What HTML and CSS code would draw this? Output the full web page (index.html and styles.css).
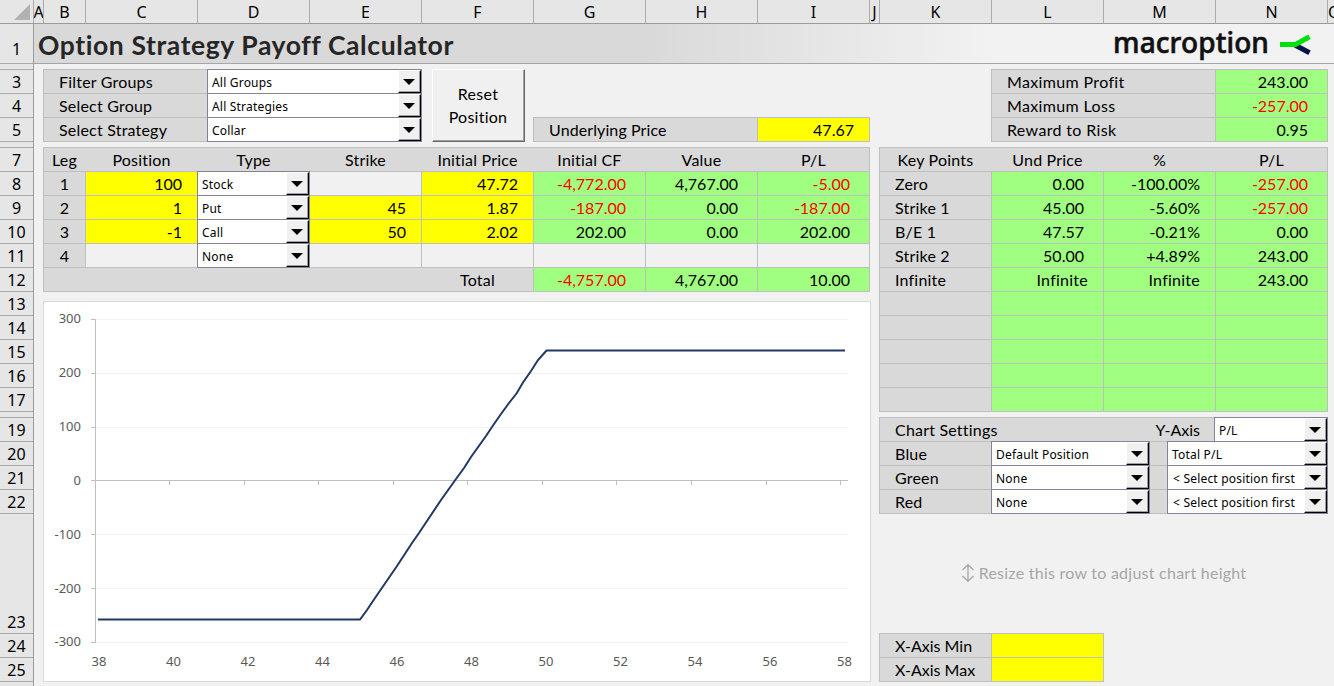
FILE: index.html
```html
<!DOCTYPE html>
<html lang="en">
  <head>
    <meta charset="utf-8">
    <title>Option Strategy Payoff Calculator</title>
    <link rel="stylesheet" href="styles.css">
  </head>
  <body>
    <div class="colheads">
      <div class="corner"><svg width="16" height="16"><path d="M16 0V16H0z" fill="#b2b2b2"/></svg></div>
      <div>A</div><div>B</div><div>C</div><div>D</div><div>E</div><div>F</div><div>G</div><div>H</div><div>I</div><div>J</div><div>K</div><div>L</div><div>M</div><div>N</div><div class="last">O</div>
    </div>
    <div class="sheet">
      <div class="rowheads">
        <div class="r1">1</div><div class="thin"></div>
        <div>3</div><div>4</div><div>5</div><div class="thin"></div>
        <div>7</div><div>8</div><div>9</div><div>10</div><div>11</div><div>12</div><div>13</div><div>14</div><div>15</div><div>16</div><div>17</div><div class="thin"></div>
        <div>19</div><div>20</div><div>21</div><div>22</div><div class="r23">23</div><div>24</div><div>25</div><div></div>
      </div>
      <div class="content">
        <div class="titlebar">
          <h1>Option Strategy Payoff Calculator</h1>
          <div class="logo">
            <span>macroption</span>
            <svg width="32" height="22" viewBox="1279 34 32 22" fill="none" stroke-width="5">
              <path d="M1295 45L1309.500 52.800" stroke="#001645"/>
              <path d="M1280 44.500H1295.500L1309.500 36.800" stroke="#00e10b"/>
            </svg>
          </div>
        </div>
        <div class="main">
          <div class="left">
            <div class="top">
              <div class="panel filter">
                <div class="label">Filter Groups</div><div class="select"><span>All Groups</span><i></i></div>
                <div class="label">Select Group</div><div class="select"><span>All Strategies</span><i></i></div>
                <div class="label">Select Strategy</div><div class="select"><span>Collar</span><i></i></div>
              </div>
              <button class="reset">Reset<br>Position</button>
              <div class="panel underlying">
                <div class="label">Underlying Price</div><div class="in num">47.67</div>
              </div>
            </div>
            <div class="panel legs">
              <div class="head"><b>Leg</b><b>Position</b><b>Type</b><b>Strike</b><b>Initial Price</b><b>Initial CF</b><b>Value</b><b>P/L</b></div>
              <div class="leg">1</div><div class="in num">100</div><div class="select"><span>Stock</span><i></i></div><div class="off"></div><div class="in num">47.72</div><div class="out num neg">-4,772.00</div><div class="out num">4,767.00</div><div class="out num neg">-5.00</div>
              <div class="leg">2</div><div class="in num">1</div><div class="select"><span>Put</span><i></i></div><div class="in num">45</div><div class="in num">1.87</div><div class="out num neg">-187.00</div><div class="out num">0.00</div><div class="out num neg">-187.00</div>
              <div class="leg">3</div><div class="in num">-1</div><div class="select"><span>Call</span><i></i></div><div class="in num">50</div><div class="in num">2.02</div><div class="out num">202.00</div><div class="out num">0.00</div><div class="out num">202.00</div>
              <div class="leg">4</div><div class="off"></div><div class="select"><span>None</span><i></i></div><div class="off"></div><div class="off"></div><div class="off"></div><div class="off"></div><div class="off"></div>
              <div class="total">Total</div><div class="out num neg">-4,757.00</div><div class="out num">4,767.00</div><div class="out num">10.00</div>
            </div>
            <div class="chart">
              <svg width="826" height="379" viewBox="44 302 826 379">
                <path class="gridline" d="M96 319.500H848M96 373.500H848M96 427.500H848M96 534.500H848M96 588.500H848M96 642.500H848"/>
                <path class="axis" d="M95.500 319V643M91 319.500H95M91 373.500H95M91 427.500H95M91 480.500H848M91 534.500H95M91 588.500H95M91 642.500H95"/>
                <path class="axis" d="M169.500 481V485M244.500 481V485M318.500 481V485M393.500 481V485M467.500 481V485M542.500 481V485M616.500 481V485M691.500 481V485M766.500 481V485M840.500 481V485"/>
                <path class="payoff" d="M98 619.500H360L367 610L375 598L397 566L412 543L419 533L441 500L456 479L464 468L471 457L486 436L494 424L501 414L509 403L516.500 393.500L523 382.500L531 371L538 360L546.500 350.500H845"/>
                <g class="ylabels">
                  <text x="81" y="323">300</text><text x="81" y="377">200</text><text x="81" y="431">100</text><text x="81" y="485">0</text><text x="81" y="539">-100</text><text x="81" y="593">-200</text><text x="81" y="646">-300</text>
                </g>
                <g class="xlabels">
                  <text x="99" y="666">38</text><text x="173.500" y="666">40</text><text x="248" y="666">42</text><text x="322.500" y="666">44</text><text x="397" y="666">46</text><text x="471.500" y="666">48</text><text x="546" y="666">50</text><text x="620.500" y="666">52</text><text x="695" y="666">54</text><text x="770" y="666">56</text><text x="844.500" y="666">58</text>
                </g>
              </svg>
            </div>
          </div>
          <div class="right">
            <div class="panel stats">
              <div class="label">Maximum Profit</div><div class="out num">243.00</div>
              <div class="label">Maximum Loss</div><div class="out num neg">-257.00</div>
              <div class="label">Reward to Risk</div><div class="out num">0.95</div>
            </div>
            <div class="panel keypoints">
              <div class="head"><b>Key Points</b><b>Und Price</b><b>%</b><b>P/L</b></div>
              <div class="label">Zero</div><div class="out num">0.00</div><div class="out pct">-100.00%</div><div class="out num neg">-257.00</div>
              <div class="label">Strike 1</div><div class="out num">45.00</div><div class="out pct">-5.60%</div><div class="out num neg">-257.00</div>
              <div class="label">B/E 1</div><div class="out num">47.57</div><div class="out pct">-0.21%</div><div class="out num">0.00</div>
              <div class="label">Strike 2</div><div class="out num">50.00</div><div class="out pct">+4.89%</div><div class="out num">243.00</div>
              <div class="label">Infinite</div><div class="out pct inf">Infinite</div><div class="out pct inf">Infinite</div><div class="out num">243.00</div>
              <div class="label"></div><div class="out"></div><div class="out"></div><div class="out"></div>
              <div class="label"></div><div class="out"></div><div class="out"></div><div class="out"></div>
              <div class="label"></div><div class="out"></div><div class="out"></div><div class="out"></div>
              <div class="label"></div><div class="out"></div><div class="out"></div><div class="out"></div>
              <div class="label"></div><div class="out"></div><div class="out"></div><div class="out"></div>
            </div>
            <div class="panel settings">
              <div class="setrow"><div class="label">Chart Settings</div><div class="yaxis">Y-Axis</div><div class="select sel-y"><span>P/L</span><i></i></div></div>
              <div class="setrow"><div class="label">Blue</div><div class="select sel-pos"><span>Default Position</span><i></i></div><div class="select sel-val"><span>Total P/L</span><i></i></div></div>
              <div class="setrow"><div class="label">Green</div><div class="select sel-pos"><span>None</span><i></i></div><div class="select sel-val hint"><span>&lt; Select position first</span><i></i></div></div>
              <div class="setrow"><div class="label">Red</div><div class="select sel-pos"><span>None</span><i></i></div><div class="select sel-val hint"><span>&lt; Select position first</span><i></i></div></div>
            </div>
            <div class="resize">
              <svg width="14" height="18" viewBox="0 0 14 18" fill="none" stroke="#a6a6a6" stroke-width="1.300"><path d="M7 1V17M1.500 6L7 .800L12.500 6M1.500 12L7 17.200L12.500 12"/></svg>
              <span>Resize this row to adjust chart height</span>
            </div>
            <div class="panel xaxis">
              <div class="label">X-Axis Min</div><div class="in"></div>
              <div class="label">X-Axis Max</div><div class="in"></div>
            </div>
          </div>
        </div>
      </div>
    </div>
  </body>
</html>
```
FILE: styles.css
```css
* {
    box-sizing: border-box;
}
body {
    margin: 0;
    width: 1334px;
    height: 686px;
    overflow: hidden;
    background: #f1f1f1;
    color: #000;
    font: 16px/23px Lato, 'Liberation Sans', sans-serif;
    font-variant-ligatures: none;
}
/* column and row headings */
.colheads {
    display: grid;
    grid-template-columns: 34px 10px 42px repeat(7, 112px) 10px repeat(4, 112px) 6px;
    height: 24px;
    background: #e6e6e6;
    border-bottom: 1px solid #9b9b9b;
    font-family: 'Noto Sans', sans-serif;
}
.colheads div {
    display: flex;
    justify-content: center;
    height: 23px;
    overflow: hidden;
    line-height: 24px;
    border-right: 1px solid #ababab;
}
.colheads .corner {
    justify-content: flex-end;
    padding: 4px 3px 0 0;
}
.colheads .last {
    justify-content: flex-start;
    border-right: 0;
}
.sheet {
    display: flex;
}
.rowheads {
    width: 34px;
    height: 662px;
    overflow: hidden;
    background: #e6e6e6;
    border-right: 1px solid #9b9b9b;
    font-family: 'Noto Sans', sans-serif;
    line-height: 22px;
}
.rowheads div {
    display: flex;
    justify-content: center;
    align-items: flex-end;
    height: 24px;
    border-bottom: 1px solid #ababab;
}
.rowheads .thin {
    height: 6px;
}
.rowheads .r1 {
    height: 40px;
    padding-bottom: 3px;
}
.rowheads .r23 {
    height: 120px;
}
.content {
    width: 1300px;
}
.titlebar {
    display: flex;
    justify-content: space-between;
    height: 40px;
    padding: 0 23px 0 4px;
    border-bottom: 1px solid #a6a6a6;
    background: linear-gradient(to right, #d9d9d9 610px, #f2f2f2 960px);
}
h1 {
    margin: 0;
    color: #262626;
    font-size: 26.5px;
    letter-spacing: .6px;
    line-height: 43px;
}
.logo {
    display: flex;
    align-items: flex-start;
    gap: 10px;
    color: #111;
    font: 500 28px/37px 'Noto Sans', sans-serif;
}
.logo span {
    letter-spacing: .1px;
    -webkit-text-stroke: .6px #111;
}
.logo svg {
    margin-top: 10px;
}
.main {
    display: flex;
    gap: 9px;
    padding: 5px 0 0 9px;
}
.left {
    width: 827px;
}
.right {
    display: flex;
    flex-direction: column;
    width: 449px;
}
/* bordered cell ranges, the grid gap draws the inner lines */
.panel {
    display: grid;
    grid-auto-rows: 23px;
    gap: 1px;
    border: 1px solid #bfbfbf;
    background: #bfbfbf;
}
.label {
    padding-left: 15px;
    background: #d9d9d9;
    letter-spacing: .2px;
}
.in {
    background: #ffff00;
}
.out {
    background: #a0ff80;
}
.off {
    background: #f1f1f1;
}
.num {
    padding-right: 15px;
    text-align: right;
}
.out.num {
    padding-right: 19px;
}
.pct {
    padding-right: 15px;
    text-align: right;
}
.inf {
    letter-spacing: .25px;
}
.neg {
    color: #ff0000;
}
.head {
    display: grid;
    grid-column: 1 / -1;
    gap: 1px;
    background: #d9d9d9;
    letter-spacing: .2px;
    text-align: center;
}
.head b {
    font-weight: normal;
}
.top {
    display: flex;
    align-items: flex-end;
    height: 73px;
}
.filter {
    width: 379px;
    grid-template-columns: 163px 213px;
}
.reset {
    width: 93px;
    height: 73px;
    margin: 0 8px 0 10px;
    padding: 0 1px 2px 0;
    border: 1px solid;
    border-color: #fff #696969 #696969 #fff;
    box-shadow: inset -1px -1px #a0a0a0;
    background: #f0f0f0;
    font: inherit;
    letter-spacing: .25px;
}
.underlying {
    width: 337px;
    grid-template-columns: 223px 111px;
}
.underlying .label {
    letter-spacing: .1px;
}
.legs {
    margin-top: 5px;
}
.legs, .legs .head {
    grid-template-columns: 41px repeat(7, 111px);
}
.leg {
    background: #d9d9d9;
    text-align: center;
}
.total {
    grid-column: 1 / 6;
    padding-left: 378px;
    background: #d9d9d9;
    letter-spacing: .25px;
    text-align: center;
}
/* combo boxes cover the lines around their cell */
.select {
    display: flex;
    justify-content: space-between;
    margin: -1px;
    border: 1px solid #83839a;
    background: #fff;
    font: 12px/25px 'Noto Sans', sans-serif;
    letter-spacing: .2px;
}
.select span {
    height: 23px;
    padding-left: 4px;
    white-space: pre;
}
.select i {
    display: flex;
    justify-content: center;
    align-items: center;
    width: 23px;
    border: 1px solid;
    border-color: #fff #000 #000 #fff;
    box-shadow: inset -1px -1px #a0a0a0;
    background: #f0f0f0;
}
.select i:before {
    content: '';
    margin-right: 1px;
    border: 6px solid transparent;
    border-top-color: #000;
    border-bottom: 0;
}
.chart {
    width: 828px;
    height: 381px;
    margin-top: 9px;
    border: 1px solid #d9d9d9;
    background: #fff;
}
.chart svg {
    display: block;
}
.chart text {
    fill: #595959;
    font: 13px 'Noto Sans', sans-serif;
}
.gridline, .axis, .payoff {
    fill: none;
    stroke: #f2f2f2;
}
.axis {
    stroke: #bfbfbf;
}
.payoff {
    stroke: #203864;
    stroke-width: 2;
}
.ylabels {
    text-anchor: end;
}
.xlabels {
    text-anchor: middle;
}
.stats {
    width: 337px;
    align-self: flex-end;
    grid-template-columns: 223px 111px;
}
.stats .label {
    letter-spacing: .35px;
}
.keypoints {
    margin-top: 5px;
}
.keypoints, .keypoints .head {
    grid-template-columns: repeat(4, 111px);
}
.settings {
    margin-top: 5px;
}
.setrow {
    display: flex;
    background: #d9d9d9;
}
.setrow .label {
    flex: 1;
}
.yaxis {
    padding-right: 15px;
}
.sel-y {
    width: 114px;
}
.sel-pos {
    width: 159px;
    margin-right: 18px;
}
.sel-val {
    width: 161px;
}
.hint span {
    padding-left: 5px;
}
.resize {
    display: flex;
    justify-content: center;
    align-items: center;
    gap: 4px;
    height: 119px;
    padding-bottom: 2px;
    color: #a6a6a6;
    letter-spacing: .25px;
}
.xaxis {
    width: 225px;
    grid-template-columns: 111px 111px;
}
.xaxis .label {
    letter-spacing: 0;
}
```
